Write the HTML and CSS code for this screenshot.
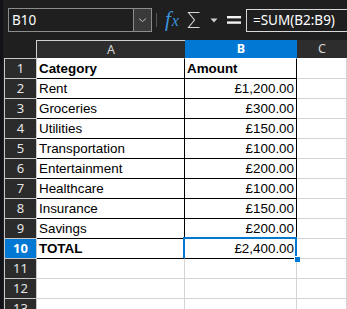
FILE: index.html
```html
<!DOCTYPE html>
<html>
<head>
<meta charset="utf-8">
<link rel="stylesheet" href="styles.css">
</head>
<body>
<div class="app">
  <div class="toolbar">
    <div class="namebox">
      <span class="nb-text">B10</span>
      <span class="nb-drop">
        <svg width="9" height="6" viewBox="0 0 9 6"><path d="M1 1.5 L4.5 4.5 L8 1.5" fill="none" stroke="#bdbdbd" stroke-width="1"/></svg>
      </span>
    </div>
    <div class="sep"></div>
    <div class="fx"><span class="fx-f">f</span><span class="fx-x">x</span></div>
    <svg class="sigma" width="14" height="18" viewBox="0 0 14 18"><path d="M12.5 1.5 H1.5 L7.5 9 L1.5 16.5 H12.5" fill="none" stroke="#d6d6d6" stroke-width="1.1"/></svg>
    <svg class="tri" width="8" height="5" viewBox="0 0 8 5"><path d="M0.5 0.5 H7.5 L4 4.5 Z" fill="#cfcfcf"/></svg>
    <svg class="eq" width="14" height="9" viewBox="0 0 14 9"><rect x="0" y="0" width="14" height="2.4" fill="#f2f2f2"/><rect x="0" y="5.4" width="14" height="2.4" fill="#f2f2f2"/></svg>
    <div class="formula">=SUM(B2:B9)</div>
  </div>

  <div class="sheet">
    <div class="corner"></div>
    <div class="ch ch-a">A</div>
    <div class="ch ch-sel">B</div>
    <div class="ch ch-c">C</div>

    <div class="rh first">1</div>
    <div class="c ta top0 bold">Category</div>
    <div class="c tb top0 bold">Amount</div>
    <div class="c g top0"></div>

    <div class="rh">2</div>
    <div class="c ta">Rent</div>
    <div class="c tb num">£1,200.00</div>
    <div class="c g"></div>

    <div class="rh">3</div>
    <div class="c ta">Groceries</div>
    <div class="c tb num">£300.00</div>
    <div class="c g"></div>

    <div class="rh">4</div>
    <div class="c ta">Utilities</div>
    <div class="c tb num">£150.00</div>
    <div class="c g"></div>

    <div class="rh">5</div>
    <div class="c ta">Transportation</div>
    <div class="c tb num">£100.00</div>
    <div class="c g"></div>

    <div class="rh">6</div>
    <div class="c ta">Entertainment</div>
    <div class="c tb num">£200.00</div>
    <div class="c g"></div>

    <div class="rh">7</div>
    <div class="c ta">Healthcare</div>
    <div class="c tb num">£100.00</div>
    <div class="c g"></div>

    <div class="rh">8</div>
    <div class="c ta">Insurance</div>
    <div class="c tb num">£150.00</div>
    <div class="c g"></div>

    <div class="rh">9</div>
    <div class="c ta">Savings</div>
    <div class="c tb num">£200.00</div>
    <div class="c g"></div>

    <div class="rh rh-sel">10</div>
    <div class="c ta bold">TOTAL</div>
    <div class="c tb num selected">£2,400.00<span class="handle"></span></div>
    <div class="c g"></div>

    <div class="rh">11</div>
    <div class="c ga tblack"></div>
    <div class="c ga tblack"></div>
    <div class="c g"></div>

    <div class="rh">12</div>
    <div class="c ga"></div>
    <div class="c ga"></div>
    <div class="c g"></div>

    <div class="rh">13</div>
    <div class="c ga"></div>
    <div class="c ga"></div>
    <div class="c g"></div>
  </div>
</div>
</body>
</html>
```

FILE: styles.css
```css
html, body {
  margin: 0;
  padding: 0;
  background: #1f1f1f;
}
.app {
  width: 347px;
  height: 309px;
  overflow: hidden;
  background: #1f1f1f;
  box-shadow: inset 3px 0 0 #12121a;
}
.toolbar {
  height: 40px;
  box-sizing: border-box;
  padding-top: 8px;
  padding-left: 8px;
  display: flex;
  align-items: flex-start;
}
.namebox {
  width: 144px;
  height: 24px;
  box-sizing: border-box;
  border: 1px solid #8c8c8c;
  display: flex;
  align-items: stretch;
}
.nb-text {
  flex: 1;
  color: #ffffff;
  font-family: "Noto Sans", "Open Sans", sans-serif;
  font-size: 13.5px;
  line-height: 22px;
  padding-left: 3px;
}
.nb-drop {
  width: 17px;
  background: #3a3a3a;
  border-left: 1px solid #8c8c8c;
  display: flex;
  align-items: center;
  justify-content: center;
}
.sep {
  width: 1px;
  height: 14px;
  background: #555555;
  margin: 5px 0 0 4px;
}
.fx {
  margin: 0 0 0 8px;
  height: 24px;
  color: #3a94dc;
  font-family: "Liberation Serif", serif;
  font-style: italic;
  display: flex;
  align-items: baseline;
}
.fx-f {
  font-size: 21px;
  line-height: 22px;
}
.fx-x {
  font-size: 16px;
  margin-left: 1px;
}
.sigma {
  margin: 3px 0 0 8px;
}
.tri {
  margin: 10px 0 0 9px;
}
.eq {
  margin: 8px 0 0 9px;
}
.formula {
  margin: 1px 0 0 5px;
  flex: 1;
  height: 23px;
  box-sizing: border-box;
  border: 1px solid #d8d8d8;
  border-right: none;
  color: #ffffff;
  font-family: "Noto Sans", "Open Sans", sans-serif;
  font-size: 13.5px;
  line-height: 20px;
  padding-left: 6px;
}

.sheet {
  margin-left: 4px;
  display: grid;
  grid-template-columns: 33px 148px 112px 1fr;
  grid-template-rows: 18px repeat(13, 20px);
}
.corner {
  background: #1f1f1f;
  border-right: 1px solid #d0d0d0;
  box-sizing: border-box;
}
.ch {
  background: #2d2d2d;
  color: #d6d6d6;
  font-family: "Noto Sans", "Open Sans", sans-serif;
  font-size: 12.5px;
  line-height: 18px;
  text-align: center;
}
.ch-a {
  border-top: 1px solid #d0d0d0;
  line-height: 17px;
}
.ch-sel {
  background: #0078d4;
  color: #ffffff;
  font-weight: bold;
}
.rh {
  background: #2b2b2b;
  color: #e6e6e6;
  font-family: "Noto Sans", "Open Sans", sans-serif;
  font-size: 13px;
  line-height: 19px;
  text-align: center;
  box-sizing: border-box;
  border-top: 1px solid #c8c8c8;
  border-left: 1px solid #c8c8c8;
  border-right: 1px solid #c8c8c8;
}
.rh-sel {
  background: #0078d4;
  color: #ffffff;
  font-weight: bold;
}
.c {
  background: #ffffff;
  color: #000000;
  font-family: "Liberation Sans", Arial, sans-serif;
  font-size: 13.4px;
  line-height: 19px;
  box-sizing: border-box;
  padding: 0 2px;
  white-space: nowrap;
  overflow: visible;
  position: relative;
}
.ta, .tb {
  border-top: 1px solid #000000;
  border-right: 1px solid #000000;
}
.g, .ga {
  border-top: 1px solid #d4d4d4;
  border-right: 1px solid #d4d4d4;
}
.top0 {
  border-top-color: #ffffff;
}
.g.top0 {
  border-top-color: #ffffff;
}
.tblack {
  border-top-color: #000000;
}
.bold {
  font-weight: bold;
}
.num {
  text-align: right;
}
.selected::after {
  content: "";
  position: absolute;
  left: -2px;
  top: -2px;
  right: -1px;
  bottom: -2px;
  border: 2px solid #0078d4;
  pointer-events: none;
}
.handle {
  position: absolute;
  right: -4px;
  bottom: -4px;
  width: 5px;
  height: 5px;
  background: #0078d4;
  border-top: 1px solid #ffffff;
  border-left: 1px solid #ffffff;
  z-index: 2;
}
```
